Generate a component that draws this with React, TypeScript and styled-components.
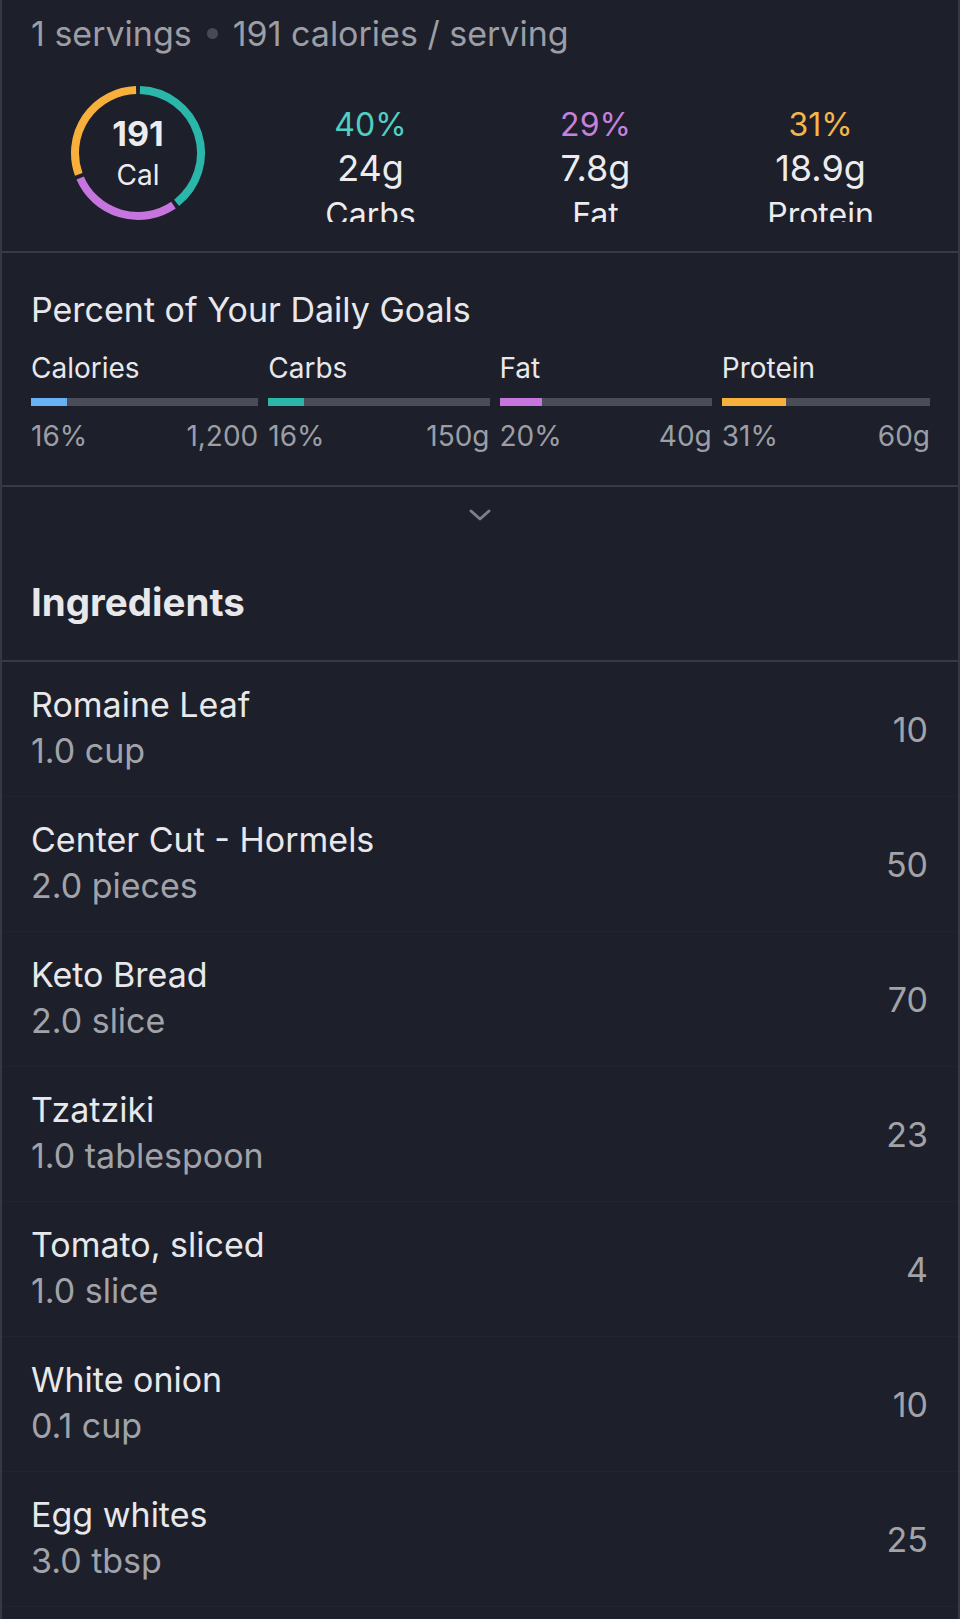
import React from "react";
import styled, { createGlobalStyle } from "styled-components";

let GlobalStyle = createGlobalStyle`
	html, body {
		margin: 0;
		padding: 0;
		background: #1d1f2a;
	}

	body {
		font-family: Inter, "Noto Sans", "Liberation Sans", sans-serif;
		color: #e6e6e9;
		-webkit-font-smoothing: antialiased;
	}
`;

let Page = styled.div`
	width: 960px;
	min-height: 1619px;
	box-sizing: border-box;
	background: #1d1f2a;
	border-left: 2px solid #353845;
	border-right: 2px solid #353845;
`;

let Section = styled.div<{ $pad?: string }>`
	padding: ${(p) => p.$pad || "0"};
	border-bottom: 2px solid #363946;
`;

let ServingLine = styled.div`
	display: flex;
	align-items: center;
	gap: 15px;
	padding-left: 29px;
	height: 40px;
	font-size: 34px;
	color: #9c9ea5;
`;

let Dot = styled.span`
	width: 11px;
	height: 11px;
	border-radius: 50%;
	background: #474a55;
`;

let MacroRow = styled.div`
	display: flex;
	align-items: flex-start;
	height: 137px;
	margin-top: 32px;
	padding-left: 68px;
	overflow: hidden;
`;

let RingBox = styled.div`
	position: relative;
	width: 136px;
	height: 136px;
	margin-right: 52px;
	flex-shrink: 0;
`;

let RingText = styled.div`
	position: absolute;
	inset: 0;
	display: flex;
	flex-direction: column;
	align-items: center;
	justify-content: center;
	color: #ececef;
`;

let RingValue = styled.div`
	font-size: 34px;
	font-weight: 700;
	line-height: 40px;
`;

let RingUnit = styled.div`
	font-size: 28px;
	line-height: 34px;
	margin-top: 4px;
`;

let MacroCol = styled.div`
	width: 225px;
	display: flex;
	flex-direction: column;
	align-items: center;
	padding-top: 20px;
`;

let MacroPct = styled.div<{ $color: string }>`
	font-size: 32px;
	line-height: 40px;
	color: ${(p) => p.$color};
`;

let MacroAmount = styled.div`
	font-size: 36px;
	line-height: 46px;
	color: #ececef;
`;

let MacroName = styled.div`
	margin-top: 2px;
	font-size: 32px;
	line-height: 44px;
	color: #ececef;
`;

let GoalsTitle = styled.div`
	font-size: 34px;
	line-height: 40px;
	color: #e8e8eb;
`;

let GoalsGrid = styled.div`
	display: grid;
	grid-template-columns: 227fr 221fr 212fr 208fr;
	column-gap: 10px;
	margin-top: 20px;
`;

let GoalLabel = styled.div`
	font-size: 28px;
	line-height: 36px;
	color: #e8e8eb;
`;

let Track = styled.div`
	height: 8px;
	margin-top: 12px;
	background: #4a4d57;
`;

let Fill = styled.div<{ $color: string }>`
	height: 100%;
	background: ${(p) => p.$color};
`;

let GoalFoot = styled.div`
	display: flex;
	justify-content: space-between;
	margin-top: 12px;
	font-size: 28px;
	line-height: 36px;
	color: #9c9ea5;
`;

let Toggle = styled.div`
	display: flex;
	justify-content: center;
	align-items: center;
	height: 56px;
`;

let IngredientsTitle = styled.div`
	margin-top: 37px;
	padding: 0 29px 36px;
	font-size: 38.5px;
	font-weight: 700;
	line-height: 44px;
	color: #e8e8eb;
`;

let Row = styled.div`
	display: flex;
	align-items: center;
	justify-content: space-between;
	height: 135px;
	box-sizing: border-box;
	padding: 0 30px 0 29px;
	border-bottom: 1px solid #21242f;
`;

let RowText = styled.div`
	margin-top: -3px;
`;

let RowName = styled.div`
	font-size: 34px;
	line-height: 46px;
	color: #e8e8eb;
`;

let RowQty = styled.div`
	font-size: 34px;
	line-height: 46px;
	color: #a1a3a9;
`;

let RowCal = styled.div`
	font-size: 34px;
	color: #a1a3a9;
`;

let macros = [
	{ name: "Carbs", pct: 40, amount: "24g", ring: "#2ab7aa", text: "#4fd0c3" },
	{ name: "Fat", pct: 29, amount: "7.8g", ring: "#c675de", text: "#c681dd" },
	{ name: "Protein", pct: 31, amount: "18.9g", ring: "#f7b03c", text: "#f4b64a" },
];

let goals = [
	{ name: "Calories", pct: 16, goal: "1,200", color: "#68b2f4" },
	{ name: "Carbs", pct: 16, goal: "150g", color: "#2ab7aa" },
	{ name: "Fat", pct: 20, goal: "40g", color: "#c675de" },
	{ name: "Protein", pct: 31, goal: "60g", color: "#f7b03c" },
];

let ingredients = [
	{ name: "Romaine Leaf", qty: "1.0 cup", cal: 10 },
	{ name: "Center Cut - Hormels", qty: "2.0 pieces", cal: 50 },
	{ name: "Keto Bread", qty: "2.0 slice", cal: 70 },
	{ name: "Tzatziki", qty: "1.0 tablespoon", cal: 23 },
	{ name: "Tomato, sliced", qty: "1.0 slice", cal: 4 },
	{ name: "White onion", qty: "0.1 cup", cal: 10 },
	{ name: "Egg whites", qty: "3.0 tbsp", cal: 25 },
];

// point on circle, 0deg = 12 o'clock, clockwise
let polar = (r: number, deg: number) => {
	let rad = ((deg - 90) * Math.PI) / 180;
	return [68 + r * Math.cos(rad), 68 + r * Math.sin(rad)];
};

let arc = (r: number, from: number, to: number) => {
	let [x1, y1] = polar(r, from);
	let [x2, y2] = polar(r, to);
	let large = to - from > 180 ? 1 : 0;
	return `M ${x1} ${y1} A ${r} ${r} 0 ${large} 1 ${x2} ${y2}`;
};

let CalorieRing = () => {
	let start = 0;
	let gap = 3.5;
	let paths = macros.map((m) => {
		let from = start + gap / 2;
		let to = start + (m.pct / 100) * 360 - gap / 2;
		start += (m.pct / 100) * 360;
		return <path key={m.name} d={arc(63, from, to)} stroke={m.ring} strokeWidth={8} fill="none" />;
	});

	return (
		<RingBox>
			<svg width="136" height="136" viewBox="0 0 136 136">
				{paths}
			</svg>
			<RingText>
				<RingValue>191</RingValue>
				<RingUnit>Cal</RingUnit>
			</RingText>
		</RingBox>
	);
};

export default function App() {
	return (
		<Page>
			<GlobalStyle />
			<Section $pad="13px 0 29px">
				<ServingLine>
					<span>1 servings</span>
					<Dot />
					<span>191 calories / serving</span>
				</ServingLine>
				<MacroRow>
					<CalorieRing />
					{macros.map((m) => (
						<MacroCol key={m.name}>
							<MacroPct $color={m.text}>{m.pct}%</MacroPct>
							<MacroAmount>{m.amount}</MacroAmount>
							<MacroName>{m.name}</MacroName>
						</MacroCol>
					))}
				</MacroRow>
			</Section>

			<Section $pad="37px 28px 31px 29px">
				<GoalsTitle>Percent of Your Daily Goals</GoalsTitle>
				<GoalsGrid>
					{goals.map((g) => (
						<div key={g.name}>
							<GoalLabel>{g.name}</GoalLabel>
							<Track>
								<Fill $color={g.color} style={{ width: `${g.pct}%` }} />
							</Track>
							<GoalFoot>
								<span>{g.pct}%</span>
								<span>{g.goal}</span>
							</GoalFoot>
						</div>
					))}
				</GoalsGrid>
			</Section>

			<Section>
				<Toggle>
					<svg width="22" height="12" viewBox="0 0 22 12">
						<polyline points="2,2 11,10 20,2" fill="none" stroke="#7c7f88" strokeWidth="3" strokeLinecap="round" strokeLinejoin="round" />
					</svg>
				</Toggle>
				<IngredientsTitle>Ingredients</IngredientsTitle>
			</Section>

			{ingredients.map((item) => (
				<Row key={item.name}>
					<RowText>
						<RowName>{item.name}</RowName>
						<RowQty>{item.qty}</RowQty>
					</RowText>
					<RowCal>{item.cal}</RowCal>
				</Row>
			))}
		</Page>
	);
}
